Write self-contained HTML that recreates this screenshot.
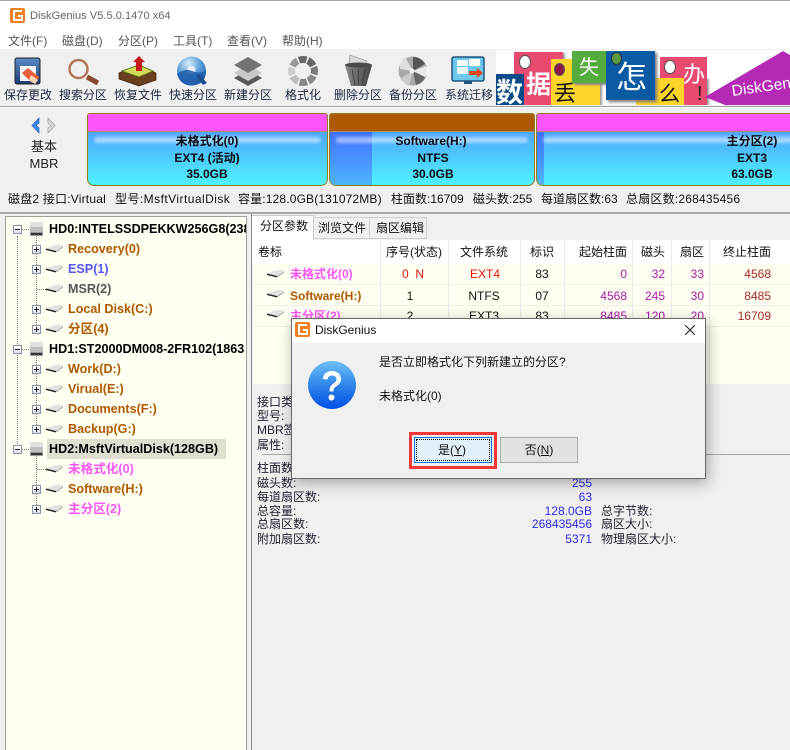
<!DOCTYPE html>
<html lang="zh">
<head>
<meta charset="utf-8">
<title>DiskGenius</title>
<style>
html,body{margin:0;padding:0;width:790px;height:750px;overflow:hidden;}
body{position:relative;background:#f0f0f0;font:12px/16px "Liberation Sans","Noto Sans CJK SC",sans-serif;color:#111;}
#root{position:absolute;left:0;top:0;width:790px;height:750px;overflow:hidden;}
.a{position:absolute;white-space:nowrap;}
.t{position:absolute;white-space:nowrap;height:16px;line-height:16px;}
.c{transform:translateX(-50%);}
.r{text-align:right;transform:translateX(-100%);}
.b{font-weight:bold;}
.tb{position:absolute;top:87px;white-space:nowrap;transform:translateX(-50%);color:#1c2740;}
.seg{position:absolute;top:113px;height:71px;border:1px solid #8f7f10;border-radius:3px 3px 7px 7px;overflow:hidden;background:linear-gradient(#4d8cff,#4ff2ff);}
.seg .top{position:absolute;left:0;right:0;top:0;height:17px;border-bottom:1px solid #b09060;}
.seg .gl{position:absolute;left:6px;right:6px;top:23px;height:6px;border-radius:4px;background:rgba(255,255,255,.5);filter:blur(1.5px);}
.seg .dk{position:absolute;left:0;top:18px;bottom:0;background:linear-gradient(#3f70ff,#4fb4ff);}
.segt{position:absolute;font-weight:bold;transform:translateX(-50%);white-space:nowrap;color:#0a0a0a;}
.tree{position:absolute;left:5px;top:216px;width:240px;height:560px;background:#fffff2;border:1px solid #a0a0a0;overflow:hidden;}
.trow{position:absolute;font-weight:bold;white-space:nowrap;font-size:12.6px;}
.pm{position:absolute;width:7px;height:7px;border:1px solid #8a94a8;background:linear-gradient(#fff,#dde);}
.pm:before{content:"";position:absolute;left:1px;right:1px;top:3px;height:1px;background:#223;}
.pm.p:after{content:"";position:absolute;top:1px;bottom:1px;left:3px;width:1px;background:#223;}
.vd{position:absolute;border-left:1px dotted #777;width:0;}
.hd{position:absolute;border-top:1px dotted #777;height:0;}
.row{position:absolute;left:253px;width:537px;height:20px;background:#fffff2;border-bottom:1px solid #eeeee6;}
.col{position:absolute;width:1px;background:#ebebeb;}
.lb{color:#223;}
.v{color:#2a2aee;}
.cjk{font-family:"Noto Sans CJK SC",sans-serif;}
</style>
</head>
<body>
<div id="root">
<!-- title and menu -->
<div class="a" style="left:0;top:0;width:790px;height:49px;background:#fff;border-top:1px solid #a8a8a8;box-sizing:border-box;"></div>
<svg class="a" style="left:10px;top:8px" width="15" height="15" viewBox="0 0 15 15"><rect width="15" height="15" rx="2" fill="#f08020"/><path d="M12 3H4v9h8V8H8" fill="none" stroke="#fff" stroke-width="2"/></svg>
<div class="t" style="left:30px;top:8px;color:#666;font-size:11.1px">DiskGenius V5.5.0.1470 x64</div>
<div class="t" style="left:8px;top:33px;color:#555">文件(F)</div>
<div class="t" style="left:62px;top:33px;color:#555">磁盘(D)</div>
<div class="t" style="left:118px;top:33px;color:#555">分区(P)</div>
<div class="t" style="left:173px;top:33px;color:#555">工具(T)</div>
<div class="t" style="left:227px;top:33px;color:#555">查看(V)</div>
<div class="t" style="left:282px;top:33px;color:#555">帮助(H)</div>

<!-- toolbar -->
<div class="a" style="left:0;top:49px;width:790px;height:57px;background:#f0f0f0;border-bottom:1px solid #a0a0a0;"></div>
<svg class="a" style="left:0;top:50px" width="496" height="37" viewBox="0 50 496 37">
 <defs>
  <linearGradient id="bl" x1="0" y1="0" x2="0" y2="1"><stop offset="0" stop-color="#5a8cc8"/><stop offset="1" stop-color="#1c3c70"/></linearGradient>
  <radialGradient id="q" cx=".4" cy=".25" r=".8"><stop offset="0" stop-color="#d8ecf8"/><stop offset=".55" stop-color="#4f9ad8"/><stop offset="1" stop-color="#1c5aa8"/></radialGradient>
  <linearGradient id="bin" x1="0" y1="0" x2="1" y2="0"><stop offset="0" stop-color="#888"/><stop offset=".5" stop-color="#666"/><stop offset="1" stop-color="#444"/></linearGradient>
 </defs>
 <!-- save -->
 <rect x="15" y="58" width="25" height="26" rx="2" fill="url(#bl)" stroke="#222"/>
 <rect x="20" y="66" width="16" height="15" fill="#f4f4f4"/>
 <path d="M22 73l6-5 11 9-3 6h-4z" fill="#e8603a"/><path d="M31 75l7 5-3 4-6-4z" fill="#f6d8b8"/>
 <!-- search -->
 <circle cx="78.500" cy="69" r="9" fill="none" stroke="#b07858" stroke-width="2.500"/>
 <path d="M87 77l11 6" stroke="#8a4a30" stroke-width="5"/>
 <!-- recover -->
 <path d="M119 73l19-8 18 8v7l-17 6-20-7z" fill="#6a3e1c" stroke="#3a2008" stroke-width=".7"/>
 <path d="M122 71l17-6 14 6-14 6z" fill="#d4da5a" stroke="#5c7a20"/>
 <path d="M136 71V62h-3l6-6 6 6h-3v9z" fill="#c81a1a"/>
 <!-- quick -->
 <circle cx="191.500" cy="71" r="14.500" fill="url(#q)"/><circle cx="191.500" cy="70" r="4" fill="#eef"/>
 <path d="M177 74q8-6 15-3t14 0q0 14-14 14.500-12 0-15-11.500z" fill="#1f5ca8" opacity=".85"/>
 <path d="M196 76l7 9 4-2-8-9z" fill="#1c4c90"/>
 <!-- new -->
 <path d="M248 70l14 8-14 8-14-8z" fill="#5a5a5a"/>
 <path d="M248 65l14 8-14 8-14-8z" fill="#c8c8c8"/>
 <path d="M248 57l14 8-14 8-14-8z" fill="#747474"/>
 <!-- format -->
 <g fill="none" stroke-width="7" stroke-dasharray="7.400 64.860">
  <circle cx="303" cy="71" r="11.500" stroke="#7a7a7a" transform="rotate(-20 303 71)"/>
  <circle cx="303" cy="71" r="11.500" stroke="#888" transform="rotate(25 303 71)"/>
  <circle cx="303" cy="71" r="11.500" stroke="#888" transform="rotate(70 303 71)"/>
  <circle cx="303" cy="71" r="11.500" stroke="#bdbdbd" transform="rotate(115 303 71)"/>
  <circle cx="303" cy="71" r="11.500" stroke="#cdcdcd" transform="rotate(160 303 71)"/>
  <circle cx="303" cy="71" r="11.500" stroke="#999" transform="rotate(205 303 71)"/>
  <circle cx="303" cy="71" r="11.500" stroke="#666" transform="rotate(250 303 71)"/>
  <circle cx="303" cy="71" r="11.500" stroke="#666" transform="rotate(295 303 71)"/>
 </g>
 <!-- delete -->
 <path d="M349 63l1-8 17 6-2 4z" fill="#d8d8d8" stroke="#888" stroke-width=".6"/>
 <path d="M345 65h27l-6 21h-15z" fill="url(#bin)"/><ellipse cx="358.500" cy="65" rx="13.500" ry="2.500" fill="#4a4a4a"/>
 <path d="M352 69l3 16M358.500 69v16M365 69l-3 16" stroke="#3a3a3a" stroke-width=".8"/>
 <!-- backup -->
 <circle cx="413" cy="71" r="14.500" fill="#a8a8a8"/>
 <path d="M413 71V57a15 15 0 0 1 12 7z" fill="#555"/><path d="M413 71l12 6a14 14 0 0 1-9 8z" fill="#666"/>
 <path d="M413 71l-12 7a14 14 0 0 0 8 8z" fill="#ccc"/><path d="M400 69l13 2-8-14a14 14 0 0 0-5 12z" fill="#ddd"/>
 <path d="M426 66l-13 5 12 6 5-5z" fill="#fff" opacity=".75"/><circle cx="412" cy="71" r="2.500" fill="#f0f0f0"/>
 <!-- migrate -->
 <rect x="452" y="57" width="32" height="24" rx="2" fill="#6ec8ee" stroke="#1d567c" stroke-width="1.500"/>
 <rect x="457" y="67" width="11" height="7" fill="#e8f6fc"/><rect x="457" y="60" width="11" height="6" fill="#f4fbfe"/><rect x="469" y="59" width="11" height="7" fill="#fff"/>
 <path d="M469 71h8v-3l6 5-6 5v-3h-8z" fill="#e04818"/>
 <rect x="464" y="81" width="8" height="3" fill="#1d567c"/>
</svg>
<div class="tb" style="left:28px">保存更改</div>
<div class="tb" style="left:83px">搜索分区</div>
<div class="tb" style="left:138px">恢复文件</div>
<div class="tb" style="left:193px">快速分区</div>
<div class="tb" style="left:248px">新建分区</div>
<div class="tb" style="left:303px">格式化</div>
<div class="tb" style="left:358px">删除分区</div>
<div class="tb" style="left:413px">备份分区</div>
<div class="tb" style="left:469px">系统迁移</div>

<!-- banner -->
<div class="a" style="left:496px;top:50px;width:294px;height:55px;background:#fff;overflow:hidden;">
 <div class="a" style="left:18px;top:2px;width:49px;height:53px;background:#e84a70;box-shadow:2px 1px 2px #999;"></div>
 <div class="a" style="left:23px;top:5px;width:10px;height:12px;border-radius:50%;background:#fff;border:1px solid #555"></div>
 <div class="a cjk" style="left:30px;top:11px;font-size:25px;line-height:44px;color:#fff;font-weight:bold;">据</div>
 <div class="a cjk" style="left:0;top:24px;width:28px;height:31px;background:#0a4a86;color:#fff;font-size:27px;line-height:34px;font-weight:bold;">数</div>
 <div class="a" style="left:55px;top:9px;width:49px;height:46px;background:#fdd42a;box-shadow:2px 1px 2px #999;"></div>
 <div class="a" style="left:58px;top:13px;width:9px;height:11px;border-radius:50%;background:#8a1848;border:1px solid #555"></div>
 <div class="a cjk" style="left:58px;top:26px;font-size:22px;line-height:32px;color:#111;">丢</div>
 <div class="a cjk" style="left:76px;top:1px;width:34px;height:32px;background:#55ac3e;color:#fff;font-size:20px;line-height:30px;text-align:center;box-shadow:2px 2px 2px #888;">失</div>
 <div class="a" style="left:140px;top:28px;width:48px;height:27px;background:#fdd42a;box-shadow:2px 1px 2px #999;"></div>
 <div class="a cjk" style="left:163px;top:28px;font-size:21px;line-height:30px;color:#111;">么</div>
 <div class="a cjk" style="left:110px;top:1px;width:49px;height:49px;background:#0a5aa4;color:#fff;font-size:31px;line-height:48px;text-indent:10px;box-shadow:2px 2px 3px #777;">怎</div>
 <div class="a" style="left:115px;top:2px;width:9px;height:11px;border-radius:50%;background:#5a9a40;border:1px solid #234"></div>
 <div class="a" style="left:164px;top:7px;width:47px;height:21px;background:#e84a70;"></div>
 <div class="a" style="left:188px;top:28px;width:23px;height:27px;background:#e84a70;box-shadow:2px 1px 2px #999;"></div>
 <div class="a" style="left:168px;top:10px;width:10px;height:12px;border-radius:50%;background:#fff;border:1px solid #555"></div>
 <div class="a cjk" style="left:187px;top:7px;font-size:22px;line-height:32px;color:#fff;">办</div>
 <div class="a" style="left:201px;top:32px;font-size:20px;line-height:24px;color:#222;">!</div>
 <svg class="a" style="left:208px;top:0" width="86" height="55"><path d="M1 47L79 1l7 4v50H21z" fill="#b42ab4"/></svg>
 <div class="a" style="left:236px;top:33px;font-size:15.5px;line-height:18px;color:#fff;transform:rotate(-8deg);transform-origin:0 50%;">DiskGen</div>
</div>

<!-- disk map -->
<div class="a" style="left:0;top:107px;width:790px;height:1px;background:#fff"></div>
<svg class="a" style="left:30px;top:117px" width="27" height="17" viewBox="0 0 27 17"><path d="M9 1L2 8.500 9 16V11L6 8.500 9 6z" fill="#3c8cf0" stroke="#1c60c0" stroke-width=".7"/><path d="M18 1l7 7.500-7 7.500v-5l3-2.500-3-2.500z" fill="#ddd" stroke="#999" stroke-width=".7"/></svg>
<div class="t c" style="left:44px;top:139px;color:#222;font-size:13px">基本</div>
<div class="t c" style="left:44px;top:156px;color:#222;font-size:13px">MBR</div>

<div class="seg" style="left:87px;width:239px;"><div class="top" style="background:#ff55ff"></div><div class="gl"></div></div>
<div class="seg" style="left:329px;width:204px;"><div class="dk" style="width:42px"></div><div class="top" style="background:#ae5800"></div><div class="gl"></div></div>
<div class="seg" style="left:536px;width:270px;"><div class="dk" style="width:7px"></div><div class="top" style="background:#ff55ff"></div><div class="gl"></div></div>
<div class="segt" style="left:207px;top:133px">未格式化(0)</div>
<div class="segt" style="left:207px;top:150px">EXT4 (活动)</div>
<div class="segt" style="left:207px;top:166px">35.0GB</div>
<div class="segt" style="left:431px;top:133px">Software(H:)</div>
<div class="segt" style="left:433px;top:150px">NTFS</div>
<div class="segt" style="left:433px;top:166px">30.0GB</div>
<div class="segt" style="left:752px;top:133px">主分区(2)</div>
<div class="segt" style="left:752px;top:150px">EXT3</div>
<div class="segt" style="left:752px;top:166px">63.0GB</div>

<!-- status -->
<div class="t" style="left:8px;top:191px;letter-spacing:.2px">磁盘2 接口:Virtual</div>
<div class="t" style="left:115px;top:191px;letter-spacing:.45px">型号:MsftVirtualDisk</div>
<div class="t" style="left:238px;top:191px;letter-spacing:.15px">容量:128.0GB(131072MB)</div>
<div class="t" style="left:391px;top:191px">柱面数:16709</div>
<div class="t" style="left:473px;top:191px">磁头数:255</div>
<div class="t" style="left:541px;top:191px">每道扇区数:63</div>
<div class="t" style="left:626px;top:191px;letter-spacing:.2px">总扇区数:268435456</div>
<div class="a" style="left:0;top:212px;width:790px;height:2px;background:#a8a8a8"></div>

<!-- tree -->
<div class="tree"></div>
<div class="a" style="left:247px;top:214px;width:4px;height:536px;background:#f0f0f0"></div>
<div class="a" style="left:251px;top:214px;width:1px;height:536px;background:#8a8a8a"></div>

<div class="vd" style="left:17px;top:236px;height:208px"></div>
<div class="vd" style="left:36px;top:236px;height:93px"></div>
<div class="vd" style="left:36px;top:356px;height:73px"></div>
<div class="vd" style="left:36px;top:456px;height:53px"></div>
<div class="pm" style="left:13px;top:225px"></div>
<div class="pm" style="left:13px;top:345px"></div>
<div class="pm" style="left:13px;top:445px"></div>
<div class="hd" style="left:22px;top:229px;width:7px"></div>
<div class="hd" style="left:22px;top:349px;width:7px"></div>
<div class="hd" style="left:22px;top:449px;width:7px"></div>
<div class="hd" style="left:37px;top:289px;width:9px"></div>
<div class="hd" style="left:37px;top:469px;width:9px"></div>
<div class="pm p" style="left:32px;top:245px"></div>
<div class="pm p" style="left:32px;top:265px"></div>
<div class="pm p" style="left:32px;top:305px"></div>
<div class="pm p" style="left:32px;top:325px"></div>
<div class="pm p" style="left:32px;top:365px"></div>
<div class="pm p" style="left:32px;top:385px"></div>
<div class="pm p" style="left:32px;top:405px"></div>
<div class="pm p" style="left:32px;top:425px"></div>
<div class="pm p" style="left:32px;top:485px"></div>
<div class="pm p" style="left:32px;top:505px"></div>

<svg class="a" style="left:0;top:214px" width="70" height="310" viewBox="0 214 70 310">
 <defs>
  <g id="hd"><rect x="0" y="0" width="13" height="10" fill="#c0c0c0"/><rect x="0" y="0" width="13" height="5" fill="#e0e0e0"/><rect x="0" y="10" width="13" height="4" fill="#9a9a9a"/><rect x="1" y="11" width="11" height="2" fill="#333"/></g>
  <g id="pt"><path d="M0 4L9 0h8l-7 6z" fill="#e2e2e2"/><path d="M0 3.500L10 6v1.500L0 5z" fill="#222"/><path d="M10 6l7-5v1.500L10 7.500z" fill="#aaa"/></g>
 </defs>
 <use href="#hd" x="30" y="222"/><use href="#hd" x="30" y="342"/><use href="#hd" x="30" y="442"/>
 <use href="#pt" x="46" y="245"/><use href="#pt" x="46" y="265"/><use href="#pt" x="46" y="285"/><use href="#pt" x="46" y="305"/><use href="#pt" x="46" y="325"/>
 <use href="#pt" x="46" y="365"/><use href="#pt" x="46" y="385"/><use href="#pt" x="46" y="405"/><use href="#pt" x="46" y="425"/>
 <use href="#pt" x="46" y="465"/><use href="#pt" x="46" y="485"/><use href="#pt" x="46" y="505"/>
</svg>

<div class="a" style="left:47px;top:439px;width:179px;height:20px;background:#e0ded0"></div>
<div class="a" style="left:6px;top:217px;width:240px;height:300px;overflow:hidden;">
 <div class="trow" style="left:43px;top:4px;color:#000">HD0:INTELSSDPEKKW256G8(238</div>
 <div class="trow" style="left:62px;top:24px;color:#ae5800">Recovery(0)</div>
 <div class="trow" style="left:62px;top:44px;color:#5555ff">ESP(1)</div>
 <div class="trow" style="left:62px;top:64px;color:#555">MSR(2)</div>
 <div class="trow" style="left:62px;top:84px;color:#ae5800">Local Disk(C:)</div>
 <div class="trow" style="left:62px;top:104px;color:#ae5800">分区(4)</div>
 <div class="trow" style="left:43px;top:124px;color:#000">HD1:ST2000DM008-2FR102(1863</div>
 <div class="trow" style="left:62px;top:144px;color:#ae5800">Work(D:)</div>
 <div class="trow" style="left:62px;top:164px;color:#ae5800">Virual(E:)</div>
 <div class="trow" style="left:62px;top:184px;color:#ae5800">Documents(F:)</div>
 <div class="trow" style="left:62px;top:204px;color:#ae5800">Backup(G:)</div>
 <div class="trow" style="left:43px;top:224px;color:#000">HD2:MsftVirtualDisk(128GB)</div>
 <div class="trow" style="left:62px;top:244px;color:#ff55ff">未格式化(0)</div>
 <div class="trow" style="left:62px;top:264px;color:#ae5800">Software(H:)</div>
 <div class="trow" style="left:62px;top:284px;color:#ff55ff">主分区(2)</div>
</div>

<!-- tabs -->
<div class="a" style="left:252px;top:214px;width:538px;height:26px;background:#f0f0f0"></div>
<div class="a" style="left:252px;top:215px;width:62px;height:25px;background:#fff;border-right:1px solid #ccc;border-top:1px solid #ccc;box-sizing:border-box;"></div>
<div class="a" style="left:314px;top:217px;width:56px;height:22px;background:#f0f0f0;border:1px solid #d0d0d0;border-left:0;box-sizing:border-box;"></div>
<div class="a" style="left:370px;top:217px;width:57px;height:22px;background:#f0f0f0;border:1px solid #d0d0d0;border-left:0;box-sizing:border-box;"></div>
<div class="t" style="left:260px;top:218px">分区参数</div>
<div class="t" style="left:318px;top:220px">浏览文件</div>
<div class="t" style="left:376px;top:220px">扇区编辑</div>

<!-- table -->
<div class="a" style="left:252px;top:240px;width:538px;height:24px;background:#fff"></div>
<div class="row" style="top:264px"></div>
<div class="row" style="top:285px"></div>
<div class="row" style="top:306px"></div>
<div class="a" style="left:253px;top:327px;width:537px;height:57px;background:#fffff2"></div>
<div class="col" style="left:380px;top:240px;height:144px"></div>
<div class="col" style="left:448px;top:240px;height:144px"></div>
<div class="col" style="left:520px;top:240px;height:144px"></div>
<div class="col" style="left:564px;top:240px;height:144px"></div>
<div class="col" style="left:632px;top:240px;height:144px"></div>
<div class="col" style="left:671px;top:240px;height:144px"></div>
<div class="col" style="left:709px;top:240px;height:144px"></div>

<div class="t" style="left:258px;top:244px">卷标</div>
<div class="t c" style="left:414px;top:244px">序号(状态)</div>
<div class="t c" style="left:484px;top:244px">文件系统</div>
<div class="t c" style="left:542px;top:244px">标识</div>
<div class="t r" style="left:627px;top:244px">起始柱面</div>
<div class="t r" style="left:665px;top:244px">磁头</div>
<div class="t r" style="left:704px;top:244px">扇区</div>
<div class="t r" style="left:771px;top:244px;width:60px;">终止柱面</div>
<svg class="a" style="left:266px;top:268px" width="20" height="54"><use href="#pt" x="1" y="2"/><use href="#pt" x="1" y="22"/><use href="#pt" x="1" y="42"/></svg>
<div class="t b" style="left:290px;top:266px;color:#ff55ff">未格式化(0)</div>
<div class="t c" style="left:413px;top:266px;color:#e81010">0&nbsp; N</div>
<div class="t c" style="left:485px;top:266px;color:#e81010">EXT4</div>
<div class="t c" style="left:542px;top:266px">83</div>
<div class="t r" style="left:627px;top:266px;color:#a818a8">0</div>
<div class="t r" style="left:665px;top:266px;color:#a818a8">32</div>
<div class="t r" style="left:704px;top:266px;color:#a818a8">33</div>
<div class="t r" style="left:771px;top:266px;width:60px;color:#a82828;">4568</div>
<div class="t b" style="left:290px;top:288px;color:#ae5800">Software(H:)</div>
<div class="t c" style="left:410px;top:288px;">1</div>
<div class="t c" style="left:484px;top:288px;">NTFS</div>
<div class="t c" style="left:542px;top:288px;">07</div>
<div class="t r" style="left:627px;top:288px;color:#a818a8">4568</div>
<div class="t r" style="left:665px;top:288px;color:#a818a8">245</div>
<div class="t r" style="left:704px;top:288px;color:#a818a8">30</div>
<div class="t r" style="left:771px;top:288px;width:60px;color:#a82828;">8485</div>
<div class="t b" style="left:290px;top:308px;color:#ff55ff">主分区(2)</div>
<div class="t c" style="left:410px;top:308px;">2</div>
<div class="t c" style="left:484px;top:308px;">EXT3</div>
<div class="t c" style="left:542px;top:308px;">83</div>
<div class="t r" style="left:627px;top:308px;color:#a818a8">8485</div>
<div class="t r" style="left:665px;top:308px;color:#a818a8">120</div>
<div class="t r" style="left:704px;top:308px;color:#a818a8">20</div>
<div class="t r" style="left:771px;top:308px;width:60px;color:#a82828;">16709</div>

<!-- details -->
<div class="t lb" style="left:257px;top:394px">接口类型:</div>
<div class="t lb" style="left:257px;top:408px">型号:</div>
<div class="t lb" style="left:257px;top:422px">MBR签名:</div>
<div class="t lb" style="left:257px;top:437px">属性:</div>
<div class="a" style="left:262px;top:454px;width:528px;height:1px;background:#a8a8a8"></div>
<div class="t lb" style="left:257px;top:460px">柱面数:</div>
<div class="t lb" style="left:257px;top:475px">磁头数:</div>
<div class="t lb" style="left:257px;top:489px">每道扇区数:</div>
<div class="t lb" style="left:257px;top:503px">总容量:</div>
<div class="t lb" style="left:257px;top:516px">总扇区数:</div>
<div class="t lb" style="left:257px;top:531px">附加扇区数:</div>
<div class="t r v" style="left:592px;top:475px">255</div>
<div class="t r v" style="left:592px;top:489px">63</div>
<div class="t r v" style="left:592px;top:503px">128.0GB</div>
<div class="t r v" style="left:592px;top:516px">268435456</div>
<div class="t r v" style="left:592px;top:531px">5371</div>
<div class="t lb" style="left:601px;top:503px">总字节数:</div>
<div class="t lb" style="left:601px;top:516px">扇区大小:</div>
<div class="t lb" style="left:601px;top:531px">物理扇区大小:</div>

<!-- dialog -->
<div class="a" style="left:291px;top:318px;width:415px;height:161px;background:#f0f0f0;border:1px solid #6a6a6a;box-sizing:border-box;box-shadow:2px 4px 14px rgba(0,0,0,.32);">
 <div class="a" style="left:0;top:0;width:413px;height:24px;background:#fff"></div>
</div>
<svg class="a" style="left:295px;top:322px" width="15" height="15" viewBox="0 0 15 15"><rect width="15" height="15" rx="2" fill="#f08020"/><path d="M12 3H4v9h8V8H8" fill="none" stroke="#fff" stroke-width="2"/></svg>
<div class="t" style="left:315px;top:322px;color:#111">DiskGenius</div>
<svg class="a" style="left:685px;top:325px" width="10" height="10"><path d="M0 0l10 10M10 0L0 10" stroke="#222" stroke-width="1.100"/></svg>
<svg class="a" style="left:308px;top:361px" width="48" height="48" viewBox="0 0 48 48">
 <defs><linearGradient id="qb" x1="0" y1="0" x2="0" y2="1"><stop offset="0" stop-color="#6cc0f8"/><stop offset=".55" stop-color="#2a80e8"/><stop offset="1" stop-color="#0050e8"/></linearGradient></defs>
 <circle cx="24" cy="24" r="24" fill="url(#qb)"/>
 <path d="M15 18c0-5 4-8 9-8s9 3 9 8c0 4-2.500 6-5 7.500-2 1.200-2.500 2.500-2.500 5h-4c0-4 1-6 4-8 2-1.300 3-2.500 3-4.500s-2-3.500-4.500-3.500-4.500 1.500-4.500 4z" fill="#fff"/>
 <circle cx="23.500" cy="36.500" r="3" fill="#fff"/>
</svg>
<div class="t" style="left:379px;top:354px;color:#111">是否立即格式化下列新建立的分区?</div>
<div class="t" style="left:379px;top:388px;color:#111">未格式化(0)</div>
<div class="a" style="left:409px;top:432px;width:88px;height:37px;border:3px solid #f03a3a;box-sizing:border-box;"></div>
<div class="a" style="left:414px;top:437px;width:78px;height:26px;background:#e2eef8;border:1px solid #0078d7;box-sizing:border-box;">
 <div class="a" style="left:1px;top:1px;right:1px;bottom:1px;border:1px dotted #111;"></div>
</div>
<div class="t c" style="left:452px;top:442px;color:#111">是(<u>Y</u>)</div>
<div class="a" style="left:500px;top:437px;width:78px;height:26px;background:#e2e2e2;border:1px solid #adadad;box-sizing:border-box;"></div>
<div class="t c" style="left:539px;top:442px;color:#111">否(<u>N</u>)</div>
</div>
</body>
</html>
